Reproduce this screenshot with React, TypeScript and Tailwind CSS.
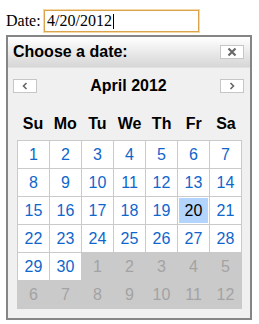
import React from "react";

const days = ["Su", "Mo", "Tu", "We", "Th", "Fr", "Sa"];

type Cell = { day: number; current: boolean };

const buildCells = (): Cell[] => {
  const cells: Cell[] = [];
  for (let d = 1; d <= 30; d++) cells.push({ day: d, current: true });
  for (let d = 1; d <= 12; d++) cells.push({ day: d, current: false });
  return cells;
};

const Chevron = ({ dir }: { dir: "left" | "right" }) => (
  <svg width="6" height="8" viewBox="0 0 6 8">
    <path
      d={dir === "left" ? "M4.5 1 L1.5 4 L4.5 7" : "M1.5 1 L4.5 4 L1.5 7"}
      fill="none"
      stroke="#666"
      strokeWidth="1.6"
    />
  </svg>
);

export default function App() {
  const cells = buildCells();
  const selected = 20;

  return (
    <div className="w-[259px] h-[324px] bg-white pl-[6px] pt-[9px] overflow-hidden">
      <div className="flex items-center font-['Liberation_Serif',serif] text-[16px] text-black">
        <span className="w-[38px]">Date:</span>
        <div className="flex items-center h-[22px] w-[155px] border border-[#dca34a] ring-1 ring-[#f3d9a8] pl-[2px] bg-white">
          <span>4/20/2012</span>
          <span className="ml-px h-[15px] w-px bg-black" />
        </div>
      </div>

      <div className="mt-[2px] w-[246px] h-[285px] border-2 border-[#858585] bg-[#f0f0f0] font-['Liberation_Sans',Arial,sans-serif]">
        <div className="flex items-center justify-between h-[31px] pl-[5px] pr-[6px] bg-gradient-to-b from-[#ffffff] to-[#d6d6d6] border-b border-[#e2e2e2]">
          <span className="text-[16px] font-bold text-black">Choose a date:</span>
          <button className="flex items-center justify-center w-[24px] h-[14px] border border-[#c6c6c6] bg-white">
            <svg width="10" height="10" viewBox="0 0 10 10">
              <path d="M1.5 1.5 L8.5 8.5 M8.5 1.5 L1.5 8.5" stroke="#6a6a6a" strokeWidth="2.2" />
            </svg>
          </button>
        </div>

        <div className="flex items-center justify-between px-[5px] pr-[6px] mt-[11px] h-[14px]">
          <button className="flex items-center justify-center w-[24px] h-[14px] border border-[#c6c6c6] bg-white">
            <Chevron dir="left" />
          </button>
          <span className="text-[16px] font-bold text-black leading-none">April 2012</span>
          <button className="flex items-center justify-center w-[24px] h-[14px] border border-[#c6c6c6] bg-white">
            <Chevron dir="right" />
          </button>
        </div>

        <div className="pl-[9px] mt-[17px]">
          <div className="grid grid-cols-7 w-[225px] h-[28px]">
            {days.map((d) => (
              <div
                key={d}
                className="flex items-center justify-center text-[16px] font-bold text-black"
              >
                {d}
              </div>
            ))}
          </div>
          <div className="mt-[2px] grid grid-cols-[repeat(7,31px)] auto-rows-[27px] gap-px p-px w-[225px] bg-[#cacaca]">
            {cells.map((c, i) => {
              const isSel = c.current && c.day === selected;
              const cls = !c.current
                ? "bg-[#cacaca] text-[#a3a3a3]"
                : isSel
                  ? "bg-[#b3d4fc] text-black shadow-[inset_0_0_0_1px_#ffffff]"
                  : "bg-white text-[#0f66cc]";
              return (
                <div
                  key={i}
                  className={`flex items-center justify-center text-[16px] ${cls}`}
                >
                  {c.day}
                </div>
              );
            })}
          </div>
        </div>
      </div>
    </div>
  );
}
